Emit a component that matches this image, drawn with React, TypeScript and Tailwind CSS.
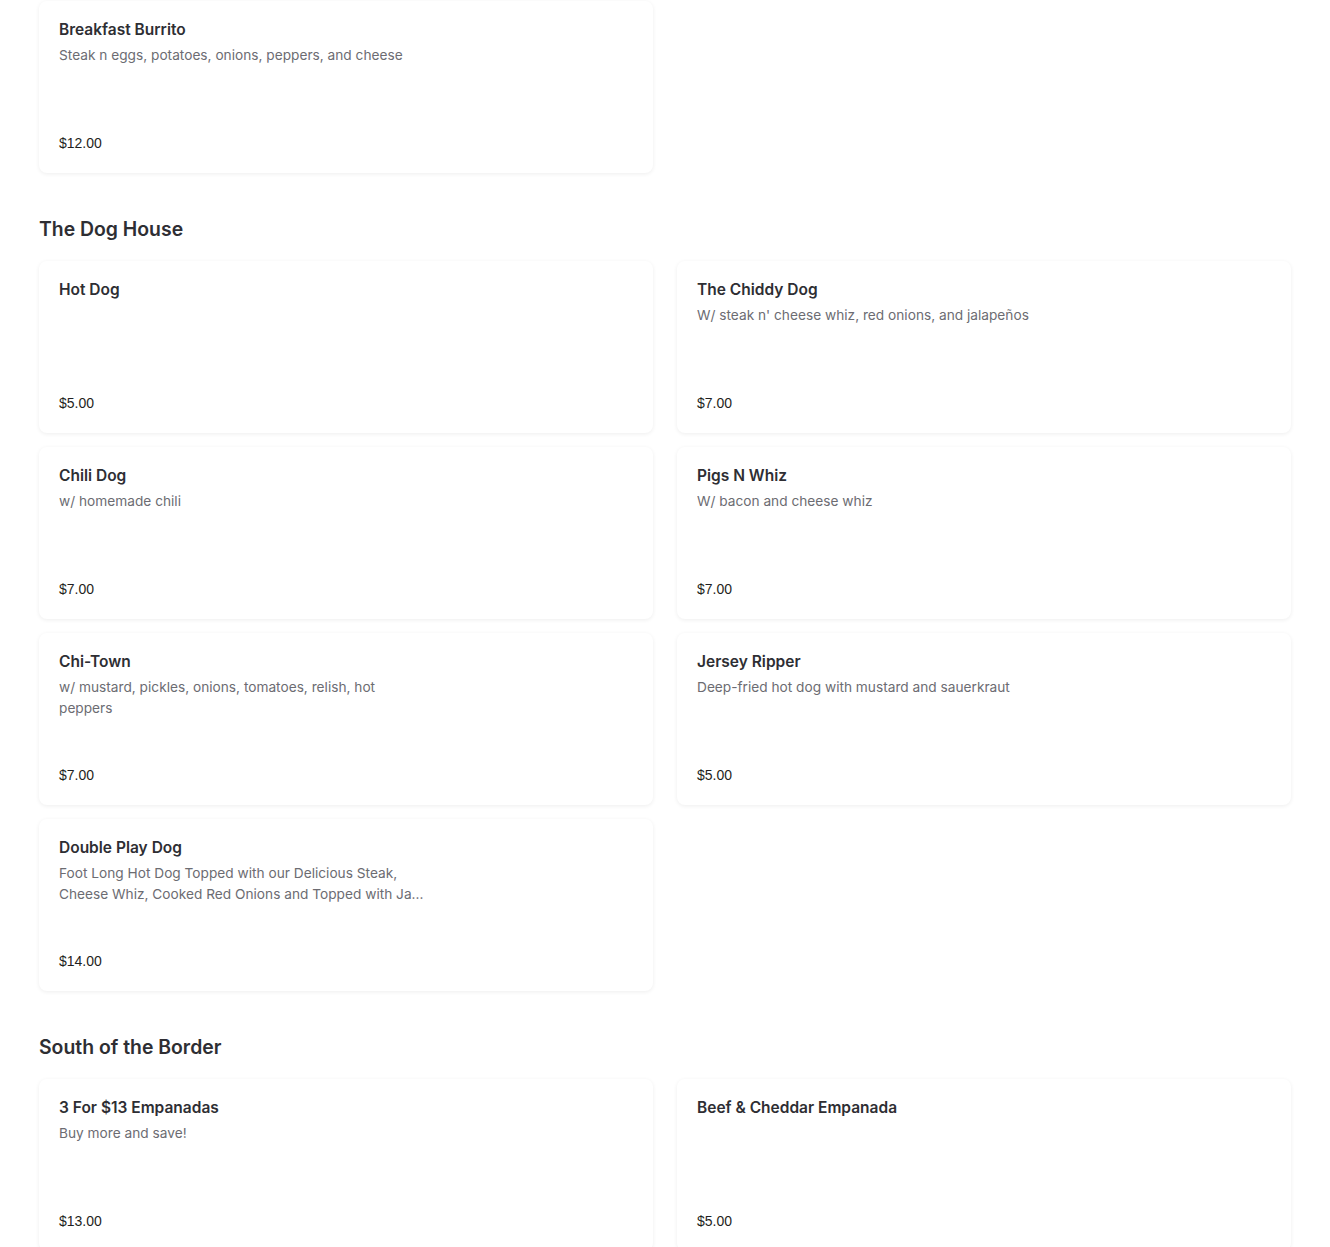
type Item = {
  name: string;
  description?: string;
  price: string;
};

type Section = {
  title?: string;
  items: Item[];
};

const sections: Section[] = [
  {
    items: [
      {
        name: "Breakfast Burrito",
        description: "Steak n eggs, potatoes, onions, peppers, and cheese",
        price: "$12.00",
      },
    ],
  },
  {
    title: "The Dog House",
    items: [
      { name: "Hot Dog", price: "$5.00" },
      {
        name: "The Chiddy Dog",
        description: "W/ steak n' cheese whiz, red onions, and jalapeños",
        price: "$7.00",
      },
      { name: "Chili Dog", description: "w/ homemade chili", price: "$7.00" },
      {
        name: "Pigs N Whiz",
        description: "W/ bacon and cheese whiz",
        price: "$7.00",
      },
      {
        name: "Chi-Town",
        description: "w/ mustard, pickles, onions, tomatoes, relish, hot peppers",
        price: "$7.00",
      },
      {
        name: "Jersey Ripper",
        description: "Deep-fried hot dog with mustard and sauerkraut",
        price: "$5.00",
      },
      {
        name: "Double Play Dog",
        // truncated the same way the menu shows it
        description:
          "Foot Long Hot Dog Topped with our Delicious Steak, Cheese Whiz, Cooked Red Onions and Topped with Ja...",
        price: "$14.00",
      },
    ],
  },
  {
    title: "South of the Border",
    items: [
      {
        name: "3 For $13 Empanadas",
        description: "Buy more and save!",
        price: "$13.00",
      },
      { name: "Beef & Cheddar Empanada", price: "$5.00" },
    ],
  },
];

function MenuCard({ item }: { item: Item }) {
  return (
    <div className="flex h-[172px] flex-col justify-between rounded-lg bg-white px-5 pt-[17px] pb-5 shadow-[0_1px_4px_rgba(0,0,0,0.07)]">
      <div className="max-w-[368px]">
        <h3 className="text-[15.5px] leading-6 font-semibold text-[#2e2e33]">
          {item.name}
        </h3>
        {item.description && (
          <p className="mt-[3px] line-clamp-2 text-[13.7px] leading-[21px] text-[#6c6c72]">
            {item.description}
          </p>
        )}
      </div>
      <span className="font-['Liberation_Sans',Arial,sans-serif] text-[14px] leading-5 text-[#1f1f22]">
        {item.price}
      </span>
    </div>
  );
}

export default function App() {
  return (
    <div className="min-h-screen bg-white px-[39px] pt-px font-['Inter',sans-serif]">
      {sections.map((section, index) => (
        <section key={index} className={index > 0 ? "mt-[42px]" : ""}>
          {section.title && (
            <h2 className="mb-[18px] text-[19.4px] leading-7 font-semibold text-[#2e2e33]">
              {section.title}
            </h2>
          )}
          <div className="grid grid-cols-2 gap-x-6 gap-y-[14px]">
            {section.items.map((item) => (
              <MenuCard key={item.name} item={item} />
            ))}
          </div>
        </section>
      ))}
    </div>
  );
}
